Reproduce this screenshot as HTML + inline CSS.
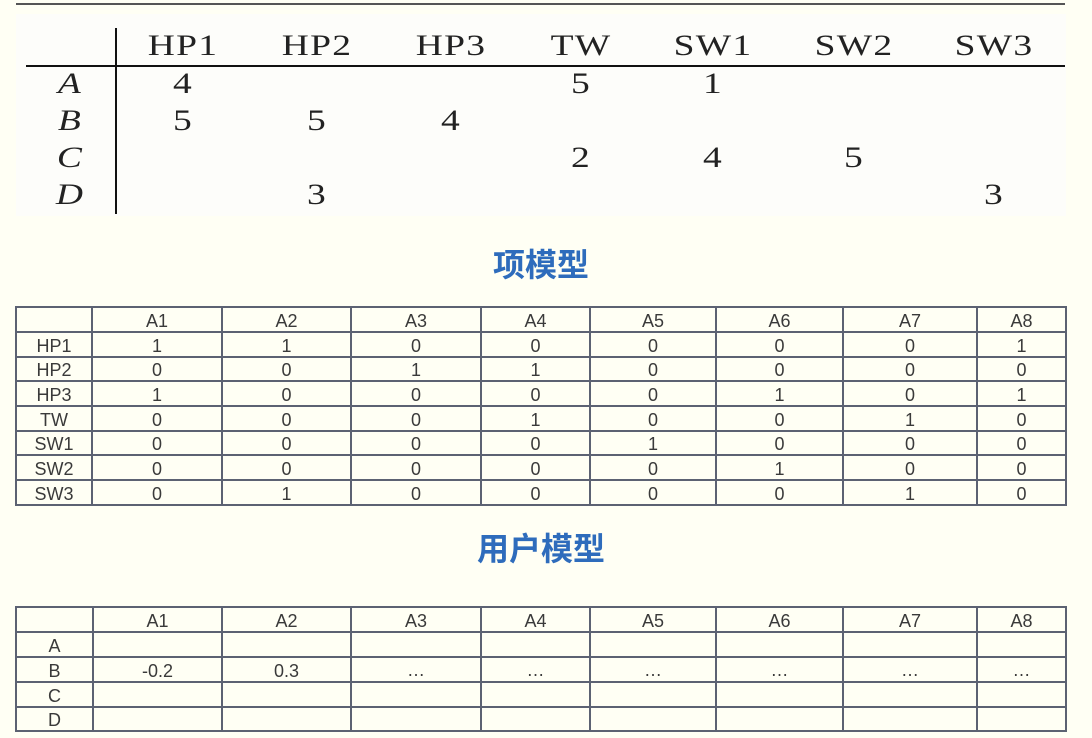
<!DOCTYPE html>
<html><head><meta charset="utf-8"><style>
body{margin:0;width:1092px;height:738px;background:#fffff4;position:relative;overflow:hidden;font-family:"Liberation Sans","Noto Sans CJK SC",sans-serif}
.ab{position:absolute}
.tx{position:absolute;font-family:"Liberation Serif","DejaVu Serif",serif;font-size:30px;color:#222;transform:translateX(-50%) scaleX(1.25);line-height:1;letter-spacing:1px}
.it{font-style:italic}
table{position:absolute;border-collapse:collapse;table-layout:fixed;font-size:18px;color:#3a3a3a}
td{border:2px solid #5c6272;text-align:center;padding:0;line-height:20px;vertical-align:bottom;overflow:hidden}
td span{display:inline-block;transform:scaleX(0.92)}
.title{position:absolute;left:0;width:1082px;text-align:center;color:#2e6cbc;font-size:32px;font-weight:bold;font-family:"Noto Sans CJK SC",sans-serif}
</style></head><body>
<div class="ab" style="left:16px;top:3px;width:1049px;height:2px;background:#555"></div>
<div class="ab" style="left:16px;top:14px;width:1050px;height:202px;background:#fdfdfa"></div>
<div class="ab" style="left:115px;top:28px;width:2px;height:186px;background:#111"></div>
<div class="ab" style="left:26px;top:65px;width:1039px;height:2px;background:#111"></div>
<div class="tx" style="left:183px;top:31px">HP1</div>
<div class="tx" style="left:317px;top:31px">HP2</div>
<div class="tx" style="left:451px;top:31px">HP3</div>
<div class="tx" style="left:581px;top:31px">TW</div>
<div class="tx" style="left:713px;top:31px">SW1</div>
<div class="tx" style="left:854px;top:31px">SW2</div>
<div class="tx" style="left:994px;top:31px">SW3</div>
<div class="tx it" style="left:70px;top:69px">A</div>
<div class="tx it" style="left:70px;top:106px">B</div>
<div class="tx it" style="left:70px;top:143px">C</div>
<div class="tx it" style="left:70px;top:180px">D</div>
<div class="tx" style="left:183px;top:69px">4</div>
<div class="tx" style="left:581px;top:69px">5</div>
<div class="tx" style="left:713px;top:69px">1</div>
<div class="tx" style="left:183px;top:106px">5</div>
<div class="tx" style="left:317px;top:106px">5</div>
<div class="tx" style="left:451px;top:106px">4</div>
<div class="tx" style="left:581px;top:143px">2</div>
<div class="tx" style="left:713px;top:143px">4</div>
<div class="tx" style="left:854px;top:143px">5</div>
<div class="tx" style="left:317px;top:180px">3</div>
<div class="tx" style="left:994px;top:180px">3</div>

<div class="title" style="top:240px">项模型</div>
<table style="left:15px;top:306px;width:1050px">
<colgroup><col style="width:76px"><col style="width:130px"><col style="width:129px"><col style="width:130px"><col style="width:109px"><col style="width:126px"><col style="width:127px"><col style="width:134px"><col style="width:89px"></colgroup>
<tr style="height:25px"><td></td><td>A1</td><td>A2</td><td>A3</td><td>A4</td><td>A5</td><td>A6</td><td>A7</td><td>A8</td></tr>
<tr style="height:24.7px"><td>HP1</td><td>1</td><td>1</td><td>0</td><td>0</td><td>0</td><td>0</td><td>0</td><td>1</td></tr>
<tr style="height:24.7px"><td>HP2</td><td>0</td><td>0</td><td>1</td><td>1</td><td>0</td><td>0</td><td>0</td><td>0</td></tr>
<tr style="height:24.7px"><td>HP3</td><td>1</td><td>0</td><td>0</td><td>0</td><td>0</td><td>1</td><td>0</td><td>1</td></tr>
<tr style="height:24.7px"><td>TW</td><td>0</td><td>0</td><td>0</td><td>1</td><td>0</td><td>0</td><td>1</td><td>0</td></tr>
<tr style="height:24.7px"><td>SW1</td><td>0</td><td>0</td><td>0</td><td>0</td><td>1</td><td>0</td><td>0</td><td>0</td></tr>
<tr style="height:24.7px"><td>SW2</td><td>0</td><td>0</td><td>0</td><td>0</td><td>0</td><td>1</td><td>0</td><td>0</td></tr>
<tr style="height:24.7px"><td>SW3</td><td>0</td><td>1</td><td>0</td><td>0</td><td>0</td><td>0</td><td>1</td><td>0</td></tr>
</table>

<div class="title" style="top:524px">用户模型</div>
<table style="left:15px;top:606px;width:1050px">
<colgroup><col style="width:77px"><col style="width:129px"><col style="width:129px"><col style="width:130px"><col style="width:109px"><col style="width:126px"><col style="width:127px"><col style="width:134px"><col style="width:89px"></colgroup>
<tr style="height:25px"><td></td><td>A1</td><td>A2</td><td>A3</td><td>A4</td><td>A5</td><td>A6</td><td>A7</td><td>A8</td></tr>
<tr style="height:25px"><td>A</td><td></td><td></td><td></td><td></td><td></td><td></td><td></td><td></td></tr>
<tr style="height:25px"><td>B</td><td>-0.2</td><td>0.3</td><td style="vertical-align:middle">…</td><td style="vertical-align:middle">…</td><td style="vertical-align:middle">…</td><td style="vertical-align:middle">…</td><td style="vertical-align:middle">…</td><td style="vertical-align:middle">…</td></tr>
<tr style="height:25px"><td>C</td><td></td><td></td><td></td><td></td><td></td><td></td><td></td><td></td></tr>
<tr style="height:24px"><td>D</td><td></td><td></td><td></td><td></td><td></td><td></td><td></td><td></td></tr>
</table>
</body></html>
